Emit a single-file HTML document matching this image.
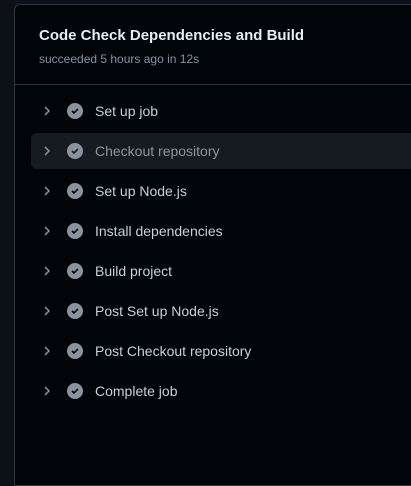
<!DOCTYPE html>
<html><head><style>
body{margin:0;width:411px;height:474px;background:#0d1117;overflow:hidden;font-family:"Liberation Sans",sans-serif;position:relative}
.panel{position:absolute;left:14px;top:4px;width:420px;height:480px;background:#010409;border:1px solid #30363d;border-radius:6px 0 0 0}
h1{position:absolute;left:24px;top:22px;margin:0;font-size:15px;font-weight:bold;color:#e6edf3}
.sub{position:absolute;left:24px;top:47px;font-size:12px;color:#8b949e}
.div{position:absolute;left:0;right:0;top:79px;border-top:1px solid #30363d}
.row{position:absolute;left:16px;width:420px;height:36px;border-radius:6px}
.row.h{background:#161b22}
.row svg{position:absolute;left:10px;top:12px}
.c{position:absolute;left:36px;top:10px;width:16px;height:16px;border-radius:50%;background:#8b949e}
.c svg{position:absolute;left:3px;top:3px}
.t{position:absolute;left:64px;top:10px;font-size:14px;color:#c9d1d9}
.h .t{color:#8b949e}
</style></head><body>
<div class="panel">
<h1>Code Check Dependencies and Build</h1>
<div class="sub">succeeded 5 hours ago in 12s</div>
<div class="div"></div>
</div>
<div style="position:absolute;left:15px;top:0">
<div class="row" style="top:93px"><svg width="12" height="12" viewBox="0 0 12 12"><path d="M4 2l4 4-4 4" stroke="#8b949e" stroke-width="1.5" fill="none"/></svg><div class="c"><svg width="10" height="10" viewBox="0 0 10 10"><path d="M2 5l2 2 4-4" stroke="#010409" stroke-width="1.6" fill="none"/></svg></div><div class="t">Set up job</div></div>
<div class="row h" style="top:133px"><svg width="12" height="12" viewBox="0 0 12 12"><path d="M4 2l4 4-4 4" stroke="#8b949e" stroke-width="1.5" fill="none"/></svg><div class="c"><svg width="10" height="10" viewBox="0 0 10 10"><path d="M2 5l2 2 4-4" stroke="#161b22" stroke-width="1.6" fill="none"/></svg></div><div class="t">Checkout repository</div></div>
<div class="row" style="top:173px"><svg width="12" height="12" viewBox="0 0 12 12"><path d="M4 2l4 4-4 4" stroke="#8b949e" stroke-width="1.5" fill="none"/></svg><div class="c"><svg width="10" height="10" viewBox="0 0 10 10"><path d="M2 5l2 2 4-4" stroke="#010409" stroke-width="1.6" fill="none"/></svg></div><div class="t">Set up Node.js</div></div>
<div class="row" style="top:213px"><svg width="12" height="12" viewBox="0 0 12 12"><path d="M4 2l4 4-4 4" stroke="#8b949e" stroke-width="1.5" fill="none"/></svg><div class="c"><svg width="10" height="10" viewBox="0 0 10 10"><path d="M2 5l2 2 4-4" stroke="#010409" stroke-width="1.6" fill="none"/></svg></div><div class="t">Install dependencies</div></div>
<div class="row" style="top:253px"><svg width="12" height="12" viewBox="0 0 12 12"><path d="M4 2l4 4-4 4" stroke="#8b949e" stroke-width="1.5" fill="none"/></svg><div class="c"><svg width="10" height="10" viewBox="0 0 10 10"><path d="M2 5l2 2 4-4" stroke="#010409" stroke-width="1.6" fill="none"/></svg></div><div class="t">Build project</div></div>
<div class="row" style="top:293px"><svg width="12" height="12" viewBox="0 0 12 12"><path d="M4 2l4 4-4 4" stroke="#8b949e" stroke-width="1.5" fill="none"/></svg><div class="c"><svg width="10" height="10" viewBox="0 0 10 10"><path d="M2 5l2 2 4-4" stroke="#010409" stroke-width="1.6" fill="none"/></svg></div><div class="t">Post Set up Node.js</div></div>
<div class="row" style="top:333px"><svg width="12" height="12" viewBox="0 0 12 12"><path d="M4 2l4 4-4 4" stroke="#8b949e" stroke-width="1.5" fill="none"/></svg><div class="c"><svg width="10" height="10" viewBox="0 0 10 10"><path d="M2 5l2 2 4-4" stroke="#010409" stroke-width="1.6" fill="none"/></svg></div><div class="t">Post Checkout repository</div></div>
<div class="row" style="top:373px"><svg width="12" height="12" viewBox="0 0 12 12"><path d="M4 2l4 4-4 4" stroke="#8b949e" stroke-width="1.5" fill="none"/></svg><div class="c"><svg width="10" height="10" viewBox="0 0 10 10"><path d="M2 5l2 2 4-4" stroke="#010409" stroke-width="1.6" fill="none"/></svg></div><div class="t">Complete job</div></div>
</div>
</body></html>
